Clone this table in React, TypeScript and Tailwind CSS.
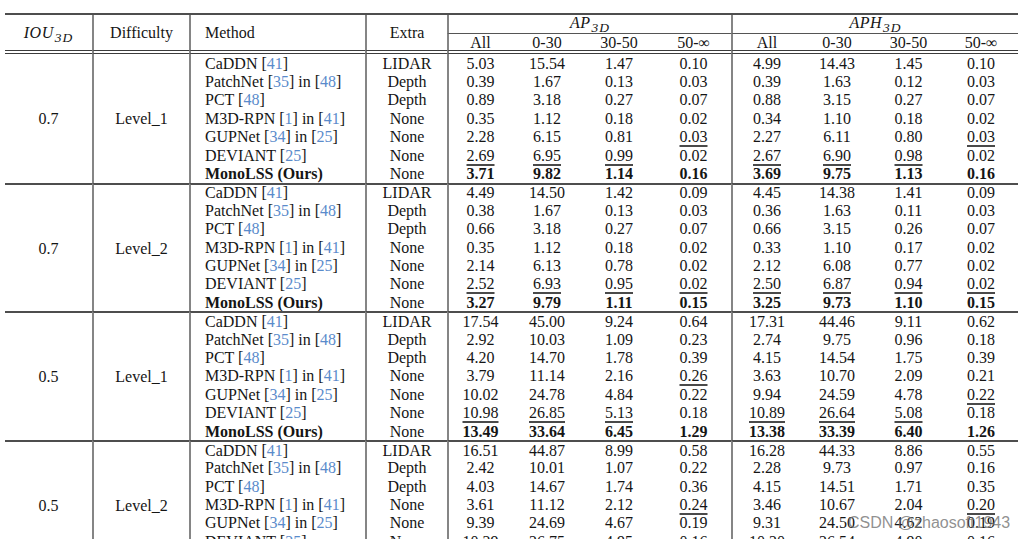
import React from "react"

const COLS = "grid grid-cols-[87px_97px_176px_82px_65px_70px_74px_75px_70px_72px_71px_74px]"
const VL = "border-l-2 border-l-[#858585]"

const METHODS = [
  "CaDDN [41]",
  "PatchNet [35] in [48]",
  "PCT [48]",
  "M3D-RPN [1] in [41]",
  "GUPNet [34] in [25]",
  "DEVIANT [25]",
  "MonoLSS (Ours)",
]
const EXTRA = ["LIDAR", "Depth", "Depth", "None", "None", "None", "None"]

type Group = { iou: string; level: string; rows: string[][]; under: number[][] }

const ALLU = [0, 1, 2, 4, 5, 6]

const GROUPS: Group[] = [
  {
    iou: "0.7",
    level: "Level_1",
    rows: [
      ["5.03", "15.54", "1.47", "0.10", "4.99", "14.43", "1.45", "0.10"],
      ["0.39", "1.67", "0.13", "0.03", "0.39", "1.63", "0.12", "0.03"],
      ["0.89", "3.18", "0.27", "0.07", "0.88", "3.15", "0.27", "0.07"],
      ["0.35", "1.12", "0.18", "0.02", "0.34", "1.10", "0.18", "0.02"],
      ["2.28", "6.15", "0.81", "0.03", "2.27", "6.11", "0.80", "0.03"],
      ["2.69", "6.95", "0.99", "0.02", "2.67", "6.90", "0.98", "0.02"],
      ["3.71", "9.82", "1.14", "0.16", "3.69", "9.75", "1.13", "0.16"],
    ],
    under: [[], [], [], [], [3, 7], ALLU, []],
  },
  {
    iou: "0.7",
    level: "Level_2",
    rows: [
      ["4.49", "14.50", "1.42", "0.09", "4.45", "14.38", "1.41", "0.09"],
      ["0.38", "1.67", "0.13", "0.03", "0.36", "1.63", "0.11", "0.03"],
      ["0.66", "3.18", "0.27", "0.07", "0.66", "3.15", "0.26", "0.07"],
      ["0.35", "1.12", "0.18", "0.02", "0.33", "1.10", "0.17", "0.02"],
      ["2.14", "6.13", "0.78", "0.02", "2.12", "6.08", "0.77", "0.02"],
      ["2.52", "6.93", "0.95", "0.02", "2.50", "6.87", "0.94", "0.02"],
      ["3.27", "9.79", "1.11", "0.15", "3.25", "9.73", "1.10", "0.15"],
    ],
    under: [[], [], [], [], [], [0, 1, 2, 3, 4, 5, 6, 7], []],
  },
  {
    iou: "0.5",
    level: "Level_1",
    rows: [
      ["17.54", "45.00", "9.24", "0.64", "17.31", "44.46", "9.11", "0.62"],
      ["2.92", "10.03", "1.09", "0.23", "2.74", "9.75", "0.96", "0.18"],
      ["4.20", "14.70", "1.78", "0.39", "4.15", "14.54", "1.75", "0.39"],
      ["3.79", "11.14", "2.16", "0.26", "3.63", "10.70", "2.09", "0.21"],
      ["10.02", "24.78", "4.84", "0.22", "9.94", "24.59", "4.78", "0.22"],
      ["10.98", "26.85", "5.13", "0.18", "10.89", "26.64", "5.08", "0.18"],
      ["13.49", "33.64", "6.45", "1.29", "13.38", "33.39", "6.40", "1.26"],
    ],
    under: [[], [], [], [3], [7], ALLU, []],
  },
  {
    iou: "0.5",
    level: "Level_2",
    rows: [
      ["16.51", "44.87", "8.99", "0.58", "16.28", "44.33", "8.86", "0.55"],
      ["2.42", "10.01", "1.07", "0.22", "2.28", "9.73", "0.97", "0.16"],
      ["4.03", "14.67", "1.74", "0.36", "4.15", "14.51", "1.71", "0.35"],
      ["3.61", "11.12", "2.12", "0.24", "3.46", "10.67", "2.04", "0.20"],
      ["9.39", "24.69", "4.67", "0.19", "9.31", "24.50", "4.62", "0.19"],
      ["10.29", "26.75", "4.95", "0.16", "10.20", "26.54", "4.90", "0.16"],
      ["12.14", "31.53", "5.89", "1.20", "12.01", "31.29", "5.84", "1.17"],
    ],
    under: [[], [], [], [3, 7], [], ALLU, []],
  },
]

// citation numbers are blue, brackets stay black
function Method({ text }: { text: string }) {
  const parts = text.split(/(\d+(?=\]))/)
  return (
    <>
      {parts.map((p, i) =>
        /^\d+$/.test(p) && parts[i + 1]?.startsWith("]") ? (
          <span key={i} className="text-[#5a8bcb]">{p}</span>
        ) : (
          <span key={i}>{p}</span>
        )
      )}
    </>
  )
}

function Sub({ base }: { base: string }) {
  return (
    <span className="italic tracking-[0.5px]">
      {base}
      <span className="text-[13.5px] tracking-[1px] relative top-[4px] ml-[1px]">3D</span>
    </span>
  )
}

export default function App() {
  const sub = ["All", "0-30", "30-50", "50-∞", "All", "0-30", "30-50", "50-∞"]

  return (
    <div className="relative w-[1023px] h-[539px] overflow-hidden bg-white text-[#151515] text-[16px] font-['Liberation_Serif','Times_New_Roman',serif] pt-[13px]">
      <div className="ml-[5px] w-[1013px] border-t-2 border-t-[#4e4e4e]">
        {/* header */}
        <div className={`${COLS} grid-rows-[18px_17px_4px] leading-[17px]`}>
          <div className="row-span-2 flex items-center justify-center pt-[1px]">
            <Sub base="IOU" />
          </div>
          <div className={`row-span-2 flex items-center justify-center ${VL}`}>Difficulty</div>
          <div className={`row-span-2 flex items-center pl-[14px] ${VL}`}>Method</div>
          <div className={`row-span-2 flex items-center justify-center ${VL}`}>Extra</div>
          <div className={`col-span-4 flex items-center justify-center pb-[2px] ${VL}`}>
            <Sub base="AP" />
          </div>
          <div className={`col-span-4 flex items-center justify-center pb-[2px] ${VL}`}>
            <Sub base="APH" />
          </div>
          {sub.map((s, i) => (
            <div
              key={i}
              className={`flex items-center justify-center border-t border-t-[#555] ${i % 4 === 0 ? VL : ""}`}
            >
              {s}
            </div>
          ))}
          {Array.from({ length: 12 }).map((_, i) => (
            <div
              key={"d" + i}
              className={`border-y border-y-[#3c3c3c] ${[1, 2, 3, 4, 8].includes(i) ? VL : ""}`}
            />
          ))}
        </div>

        {/* body */}
        <div className={`${COLS} auto-rows-[18.4px] leading-[17px]`}>
          {GROUPS.map((g, gi) =>
            g.rows.map((vals, ri) => {
              const top = ri === 0 && gi > 0 ? "border-t-2 border-t-[#4e4e4e]" : ""
              const bold = ri === 6 ? "font-bold" : ""
              return (
                <React.Fragment key={gi + "-" + ri}>
                  {ri === 0 && (
                    <>
                      <div className={`row-span-7 flex items-center justify-center ${top}`}>{g.iou}</div>
                      <div className={`row-span-7 flex items-center justify-center ${VL} ${top}`}>
                        {g.level}
                      </div>
                    </>
                  )}
                  <div className={`flex items-center pl-[14px] whitespace-nowrap ${VL} ${top} ${bold}`}>
                    <Method text={METHODS[ri]} />
                  </div>
                  <div className={`flex items-center justify-center ${VL} ${top}`}>{EXTRA[ri]}</div>
                  {vals.map((v, vi) => (
                    <div
                      key={vi}
                      className={`flex items-center justify-center ${vi % 4 === 0 ? VL : ""} ${top} ${bold}`}
                    >
                      {g.under[ri].includes(vi) ? (
                        <span className="underline decoration-[#4a4a4a] decoration-[1.5px] underline-offset-[3px]">
                          {v}
                        </span>
                      ) : (
                        v
                      )}
                    </div>
                  ))}
                </React.Fragment>
              )
            })
          )}
        </div>
      </div>

      {/* watermark */}
      <div className="absolute left-[848px] top-[514px] text-[16px] leading-[18px] font-['Liberation_Sans',Arial,sans-serif] text-[rgba(115,115,115,0.8)] whitespace-nowrap">
        CSDN @zhaosoft1943
      </div>
    </div>
  )
}
